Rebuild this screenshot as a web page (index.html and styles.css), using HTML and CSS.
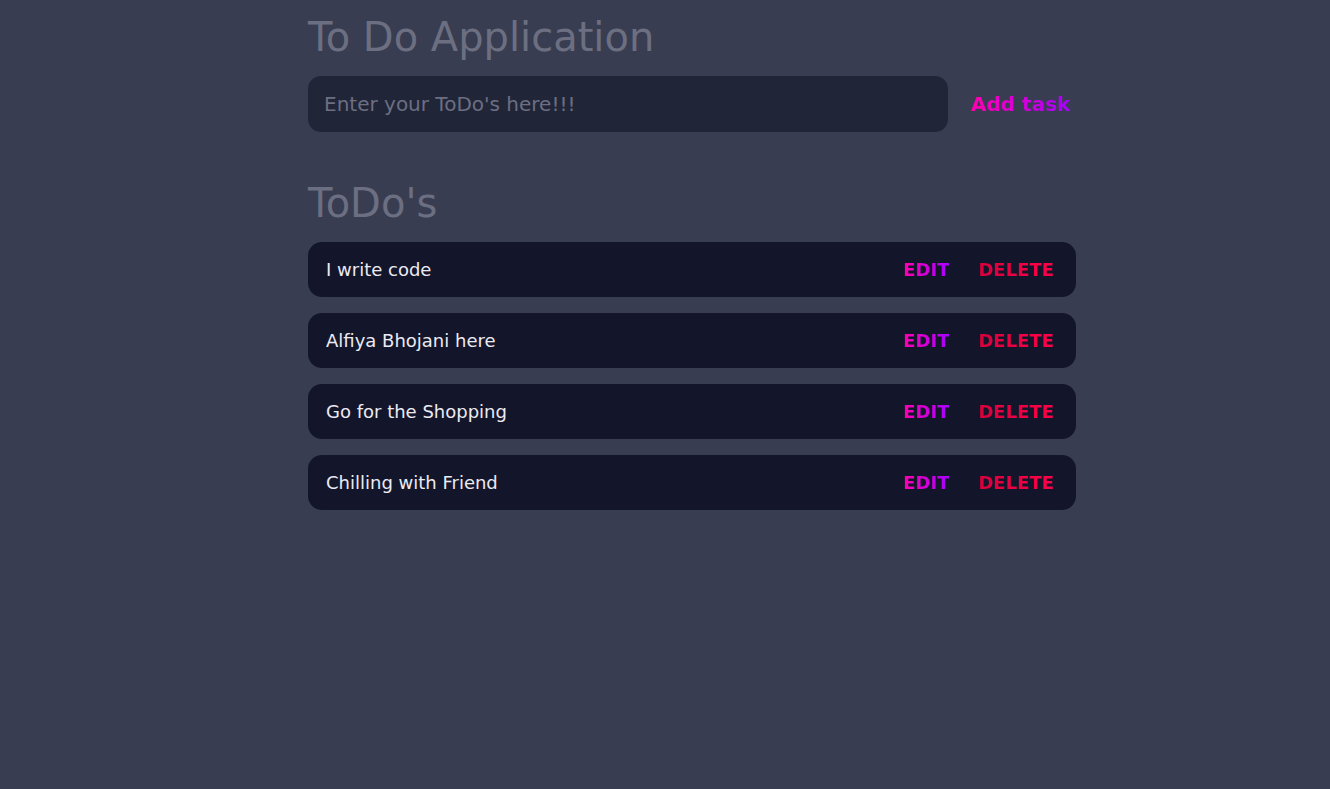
FILE: index.html
```html
<!DOCTYPE html>
<html lang="en">
<head>
<meta charset="utf-8">
<title>To Do Application</title>
<link rel="stylesheet" href="styles.css">
</head>
<body>
<main class="app">
  <h1 class="title">To Do Application</h1>
  <form class="add-form">
    <input class="add-input" type="text" placeholder="Enter your ToDo's here!!!">
    <button class="add-btn" type="button"><span class="grad-text">Add task</span></button>
  </form>
  <h2 class="subtitle">ToDo's</h2>
  <ul class="todo-list">
    <li class="todo">
      <span class="todo-text">I write code</span>
      <div class="todo-actions">
        <button class="btn-edit" type="button"><span class="grad-text">EDIT</span></button>
        <button class="btn-delete" type="button"><span class="del-text">DELETE</span></button>
      </div>
    </li>
    <li class="todo">
      <span class="todo-text">Alfiya Bhojani here</span>
      <div class="todo-actions">
        <button class="btn-edit" type="button"><span class="grad-text">EDIT</span></button>
        <button class="btn-delete" type="button"><span class="del-text">DELETE</span></button>
      </div>
    </li>
    <li class="todo">
      <span class="todo-text">Go for the Shopping</span>
      <div class="todo-actions">
        <button class="btn-edit" type="button"><span class="grad-text">EDIT</span></button>
        <button class="btn-delete" type="button"><span class="del-text">DELETE</span></button>
      </div>
    </li>
    <li class="todo">
      <span class="todo-text">Chilling with Friend</span>
      <div class="todo-actions">
        <button class="btn-edit" type="button"><span class="grad-text">EDIT</span></button>
        <button class="btn-delete" type="button"><span class="del-text">DELETE</span></button>
      </div>
    </li>
  </ul>
</main>
</body>
</html>
```

FILE: styles.css
```css
* { box-sizing: border-box; }

html, body {
  margin: 0;
  padding: 0;
  background: #393d51;
  height: 100%;
}

body {
  font-family: "DejaVu Sans", sans-serif;
}

.app {
  width: 768px;
  margin-left: 308px;
  padding-top: 12px;
}

.title {
  margin: 0;
  font-size: 40px;
  font-weight: normal;
  line-height: 50px;
  color: #6c6f82;
}

.add-form {
  display: flex;
  align-items: center;
  gap: 23px;
  margin-top: 14px;
}

.add-input {
  flex: none;
  width: 640px;
  height: 56px;
  border: none;
  outline: none;
  border-radius: 13px;
  background: #212538;
  padding: 0 16px;
  font-family: "DejaVu Sans", sans-serif;
  font-size: 20px;
  color: #c8c9d4;
}

.add-input::placeholder {
  color: #6c6f82;
}

.add-btn {
  flex: none;
  white-space: nowrap;
  background: none;
  border: none;
  padding: 0;
  font-family: "DejaVu Sans", sans-serif;
  font-weight: bold;
  font-size: 20px;
  cursor: pointer;
}

.grad-text {
  background: linear-gradient(90deg, #ff00b0, #a800ff);
  -webkit-background-clip: text;
  background-clip: text;
  color: transparent;
}

.del-text {
  background: linear-gradient(90deg, #d8003c, #ff0048);
  -webkit-background-clip: text;
  background-clip: text;
  color: transparent;
}

.subtitle {
  margin: 46px 0 0;
  font-size: 40px;
  font-weight: normal;
  line-height: 50px;
  color: #6c6f82;
}

.todo-list {
  list-style: none;
  margin: 14px 0 0;
  padding: 0;
  display: flex;
  flex-direction: column;
  gap: 16px;
}

.todo {
  display: flex;
  align-items: center;
  justify-content: space-between;
  height: 55px;
  padding: 0 22px 0 18px;
  border-radius: 14px;
  background: #13162a;
}

.todo-text {
  font-size: 18px;
  color: #eceaf2;
}

.todo-actions {
  display: flex;
  align-items: center;
  gap: 29px;
}

.btn-edit,
.btn-delete {
  background: none;
  border: none;
  padding: 0;
  font-family: "DejaVu Sans", sans-serif;
  font-weight: bold;
  font-size: 18px;
  cursor: pointer;
}
```
